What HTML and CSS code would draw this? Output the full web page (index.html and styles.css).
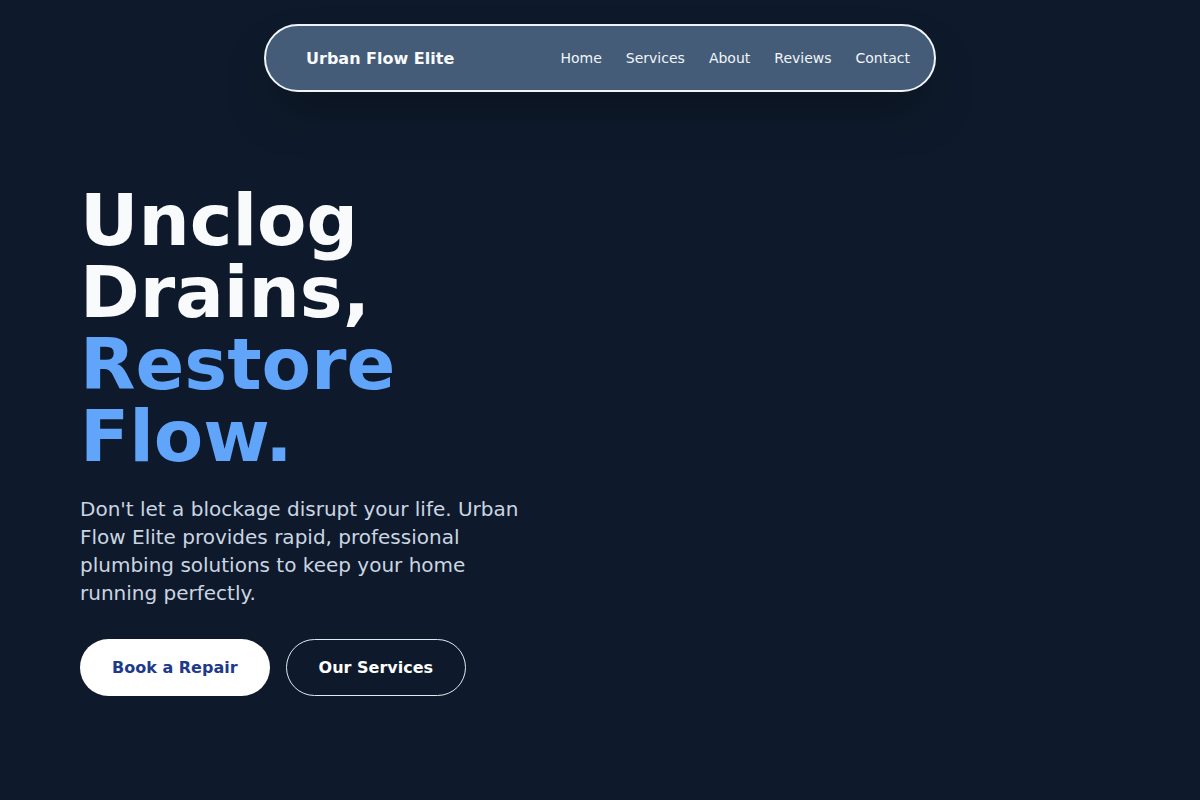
FILE: index.html
```html
<!DOCTYPE html>
<html lang="en">
<head>
<meta charset="utf-8">
<title>Urban Flow Elite</title>
<link rel="stylesheet" href="styles.css">
</head>
<body>
<header class="site-header">
  <nav class="nav">
    <a class="brand" href="#">Urban Flow Elite</a>
    <ul class="nav-links">
      <li><a href="#">Home</a></li>
      <li><a href="#">Services</a></li>
      <li><a href="#">About</a></li>
      <li><a href="#">Reviews</a></li>
      <li><a href="#">Contact</a></li>
    </ul>
  </nav>
</header>
<main class="hero">
  <h1 class="hero-title">Unclog<br>Drains,<br><span class="accent">Restore<br>Flow.</span></h1>
  <p class="hero-text">Don't let a blockage disrupt your life. Urban Flow Elite provides rapid, professional plumbing solutions to keep your home running perfectly.</p>
  <div class="hero-actions">
    <a class="btn btn-primary" href="#">Book a Repair</a>
    <a class="btn btn-outline" href="#">Our Services</a>
  </div>
</main>
</body>
</html>
```
FILE: styles.css
```css
* { box-sizing: border-box; }
html, body { margin: 0; padding: 0; }
body {
  background: #0e1a2b;
  font-family: "DejaVu Sans", "Liberation Sans", sans-serif;
  color: #f8fafc;
  min-height: 800px;
}
a { text-decoration: none; color: inherit; }

.site-header {
  display: flex;
  justify-content: center;
  padding-top: 24px;
}
.nav {
  width: 672px;
  height: 68px;
  display: flex;
  align-items: center;
  justify-content: space-between;
  padding: 0 24px 0 40px;
  background: #445c78;
  border: 2px solid #f1f5f9;
  border-radius: 9999px;
  box-shadow: 0 25px 50px -12px rgba(0, 0, 0, 0.35);
}
.brand {
  font-weight: 700;
  font-size: 16px;
  color: #f8fafc;
}
.nav-links {
  list-style: none;
  display: flex;
  gap: 24px;
  margin: 0;
  padding: 0;
  font-size: 14px;
  color: #f1f5f9;
}

.hero {
  padding: 92px 80px 0;
}
.hero-title {
  margin: 0;
  font-size: 72px;
  line-height: 72px;
  font-weight: 700;
  color: #f8fafc;
}
.accent { color: #60a5fa; }
.hero-text {
  margin: 23px 0 0;
  max-width: 448px;
  font-size: 20px;
  line-height: 28px;
  color: #cbd5e1;
}
.hero-actions {
  display: flex;
  gap: 16px;
  margin-top: 32px;
}
.btn {
  display: inline-flex;
  align-items: center;
  justify-content: center;
  height: 57px;
  padding: 0 32px;
  border-radius: 9999px;
  font-size: 16px;
  font-weight: 700;
}
.btn-primary {
  background: #ffffff;
  color: #1e3a8a;
}
.btn-outline {
  border: 1px solid #e2e8f0;
  color: #ffffff;
}
```
